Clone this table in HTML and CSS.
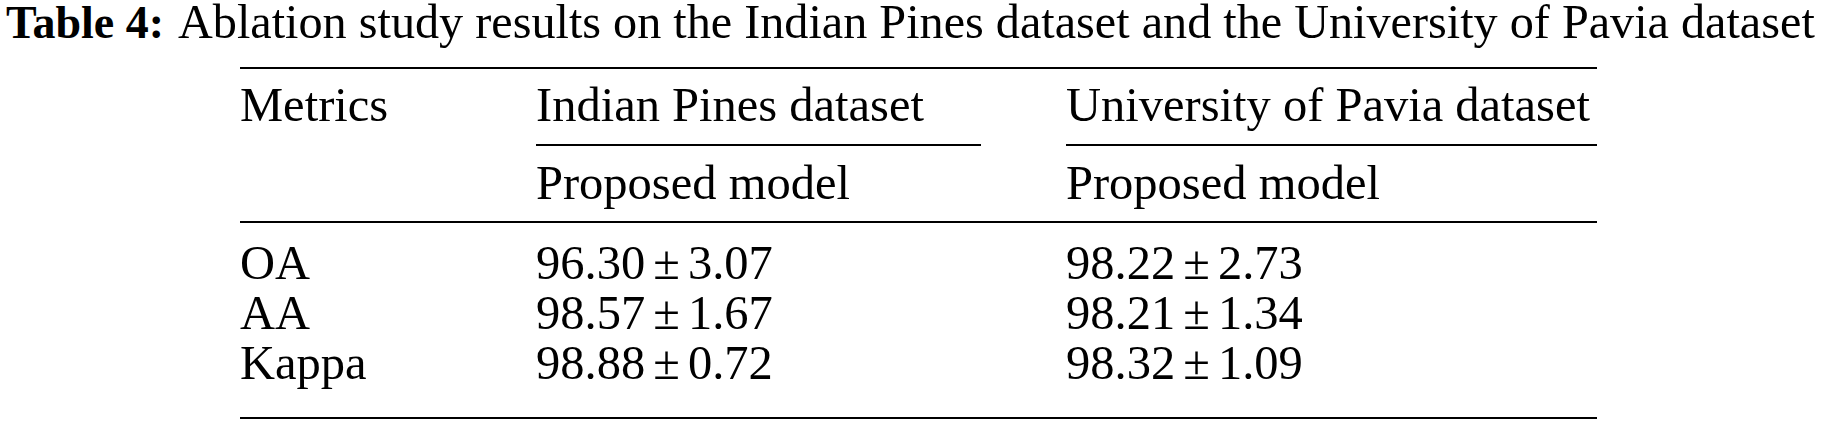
FILE: index.html
```html
<!DOCTYPE html>
<html lang="en">
<head>
<meta charset="utf-8">
<title>Table 4</title>
<link rel="stylesheet" href="styles.css">
</head>
<body>
<div class="page">
  <p class="caption"><b class="caption-label">Table 4:</b><span class="caption-text">Ablation study results on the Indian Pines dataset and the University of Pavia dataset</span></p>
  <table class="tbl">
    <colgroup>
      <col class="c1">
      <col class="c2">
      <col class="c3">
    </colgroup>
    <thead>
      <tr class="h1">
        <th>Metrics</th>
        <th><div class="grp grp-mid">Indian Pines dataset</div></th>
        <th><div class="grp">University of Pavia dataset</div></th>
      </tr>
      <tr class="h2">
        <th></th>
        <th>Proposed model</th>
        <th>Proposed model</th>
      </tr>
    </thead>
    <tbody>
      <tr class="first">
        <td>OA</td>
        <td class="val">96.30 ± 3.07</td>
        <td class="val">98.22 ± 2.73</td>
      </tr>
      <tr>
        <td>AA</td>
        <td class="val">98.57 ± 1.67</td>
        <td class="val">98.21 ± 1.34</td>
      </tr>
      <tr class="last">
        <td>Kappa</td>
        <td class="val">98.88 ± 0.72</td>
        <td class="val">98.32 ± 1.09</td>
      </tr>
    </tbody>
  </table>
</div>
</body>
</html>
```
FILE: styles.css
```css
html, body {
  margin: 0;
  padding: 0;
  background: #ffffff;
}
body {
  color: #000000;
  font-family: "Liberation Serif", "Times New Roman", serif;
}
.page {
  width: 1837px;
}
.caption {
  margin: 0 0 22px 6px;
  font-size: 48.2px;
  line-height: 44px;
  white-space: nowrap;
}
.caption-label {
  font-weight: bold;
  font-size: 46px;
  margin-right: 14px;
}
.tbl {
  width: 1357px;
  margin: 0 auto;
  border-collapse: collapse;
  table-layout: fixed;
  font-size: 48.5px;
  line-height: 50px;
  border-top: 2px solid #000;
  border-bottom: 2px solid #000;
}
.c1 { width: 296px; }
.c2 { width: 530px; }
.c3 { width: 531px; }
.tbl th, .tbl td {
  padding: 0;
  text-align: left;
  font-weight: normal;
  white-space: nowrap;
  vertical-align: top;
}
.val {
  word-spacing: -4px;
}
.h1 th {
  padding-top: 11px;
}
.grp {
  padding-bottom: 14px;
  border-bottom: 2px solid #000;
}
.grp-mid {
  margin-right: 85px;
}
.h1 th:first-child {
  padding-bottom: 16px;
}
.h2 th {
  padding-top: 12px;
  padding-bottom: 13px;
  border-bottom: 2px solid #000;
}
.first td {
  padding-top: 15px;
}
.last td {
  padding-bottom: 29px;
}
```
